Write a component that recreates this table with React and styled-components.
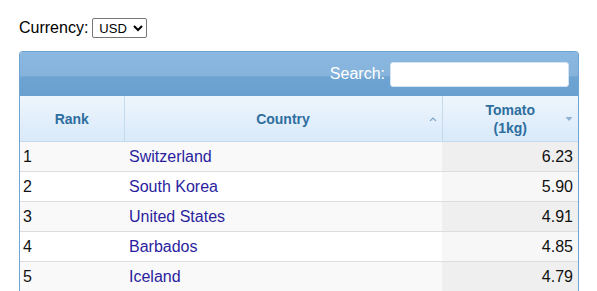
import React from 'react';
import styled, { createGlobalStyle } from 'styled-components';

const GlobalStyle = createGlobalStyle`
  body {
    margin: 0;
    background: #fff;
    font-family: "Liberation Sans", Arial, sans-serif;
  }
`;

const Page = styled.main`
  padding: 17px 18px 0 19px;
  width: 560px;
`;

const CurrencyBar = styled.div`
  display: flex;
  align-items: center;
  gap: 4px;
  font-size: 16px;
  color: #000;
  height: 22px;
  margin-bottom: 12px;
`;

const Select = styled.select`
  font-family: "Liberation Sans", Arial, sans-serif;
  font-size: 13px;
  height: 20px;
  width: 55px;
  padding: 0 0 0 2px;
  border: 1px solid #767676;
  border-radius: 2px;
  background: #fff;
  color: #000;
`;

const Grid = styled.div`
  border: 1px solid #6fa3d2;
  border-bottom: none;
  border-radius: 4px 4px 0 0;
  overflow: hidden;
`;

const Toolbar = styled.div`
  height: 44px;
  display: flex;
  align-items: center;
  justify-content: flex-end;
  gap: 5px;
  padding-right: 9px;
  background: linear-gradient(
    to bottom,
    #8ab8e0 0%,
    #86b3dc 55%,
    #6ea4d2 56%,
    #6aa0d0 100%
  );
  color: #fff;
  font-size: 16px;
`;

const SearchInput = styled.input`
  width: 179px;
  height: 25px;
  border: 1px solid #d3e3f2;
  border-radius: 3px;
  background: #fff;
  padding: 0 4px;
  box-sizing: border-box;
`;

const Table = styled.table`
  width: 100%;
  border-collapse: collapse;
  table-layout: fixed;
`;

const HeadCell = styled.th`
  position: relative;
  height: 45px;
  padding: 0 16px;
  border-left: 1px solid #c5dbec;
  border-bottom: 1px solid #c5dbec;
  background: linear-gradient(to bottom, #eef6fd 0%, #e3effb 50%, #d9eafa 100%);
  color: #2e6e9e;
  font-size: 14px;
  font-weight: bold;
  text-align: center;
  line-height: 18px;
  &:first-child {
    border-left: none;
  }
`;

const SortMark = styled.span`
  position: absolute;
  right: 5px;
  top: 50%;
  transform: translateY(-50%);
  display: flex;
`;

const Row = styled.tr`
  background: ${(p) => (p.$odd ? '#f9f9f9' : '#fff')};
  border-top: 1px solid #dddddd;
  &:first-child {
    border-top: none;
  }
`;

const Cell = styled.td`
  height: 29px;
  padding: 0 5px;
  font-size: 16px;
  color: ${(p) => (p.$link ? '#2a1e9e' : '#111')};
  text-align: ${(p) => (p.$num ? 'right' : 'left')};
  background: ${(p) => (p.$sorted ? (p.$odd ? '#efefef' : '#f7f7f7') : 'transparent')};
  &:first-child {
    padding-left: 3px;
  }
`;

const rows = [
  { rank: 1, country: 'Switzerland', price: '6.23' },
  { rank: 2, country: 'South Korea', price: '5.90' },
  { rank: 3, country: 'United States', price: '4.91' },
  { rank: 4, country: 'Barbados', price: '4.85' },
  { rank: 5, country: 'Iceland', price: '4.79' },
];

const CaretUp = () => (
  <svg width="8" height="5" viewBox="0 0 8 5">
    <path d="M1 4.5 L4 1.5 L7 4.5" fill="none" stroke="#7fa7c9" strokeWidth="1.2" />
  </svg>
);

const TriangleDown = () => (
  <svg width="8" height="5" viewBox="0 0 8 5">
    <path d="M0.5 0.5 L7.5 0.5 L4 4.5 Z" fill="#8eb2d2" />
  </svg>
);

export default function App() {
  return (
    <>
      <GlobalStyle />
      <Page>
        <CurrencyBar>
          Currency:
          <Select defaultValue="USD">
            <option>USD</option>
            <option>EUR</option>
          </Select>
        </CurrencyBar>
        <Grid>
          <Toolbar>
            Search:
            <SearchInput type="text" />
          </Toolbar>
          <Table>
            <colgroup>
              <col style={{ width: 104 }} />
              <col style={{ width: 318 }} />
              <col />
            </colgroup>
            <thead>
              <tr>
                <HeadCell>Rank</HeadCell>
                <HeadCell>
                  Country
                  <SortMark><CaretUp /></SortMark>
                </HeadCell>
                <HeadCell>
                  Tomato
                  <br />
                  (1kg)
                  <SortMark><TriangleDown /></SortMark>
                </HeadCell>
              </tr>
            </thead>
            <tbody>
              {rows.map((r, i) => (
                <Row key={r.rank} $odd={i % 2 === 0}>
                  <Cell>{r.rank}</Cell>
                  <Cell $link>{r.country}</Cell>
                  <Cell $num $sorted $odd={i % 2 === 0}>{r.price}</Cell>
                </Row>
              ))}
            </tbody>
          </Table>
        </Grid>
      </Page>
    </>
  );
}
